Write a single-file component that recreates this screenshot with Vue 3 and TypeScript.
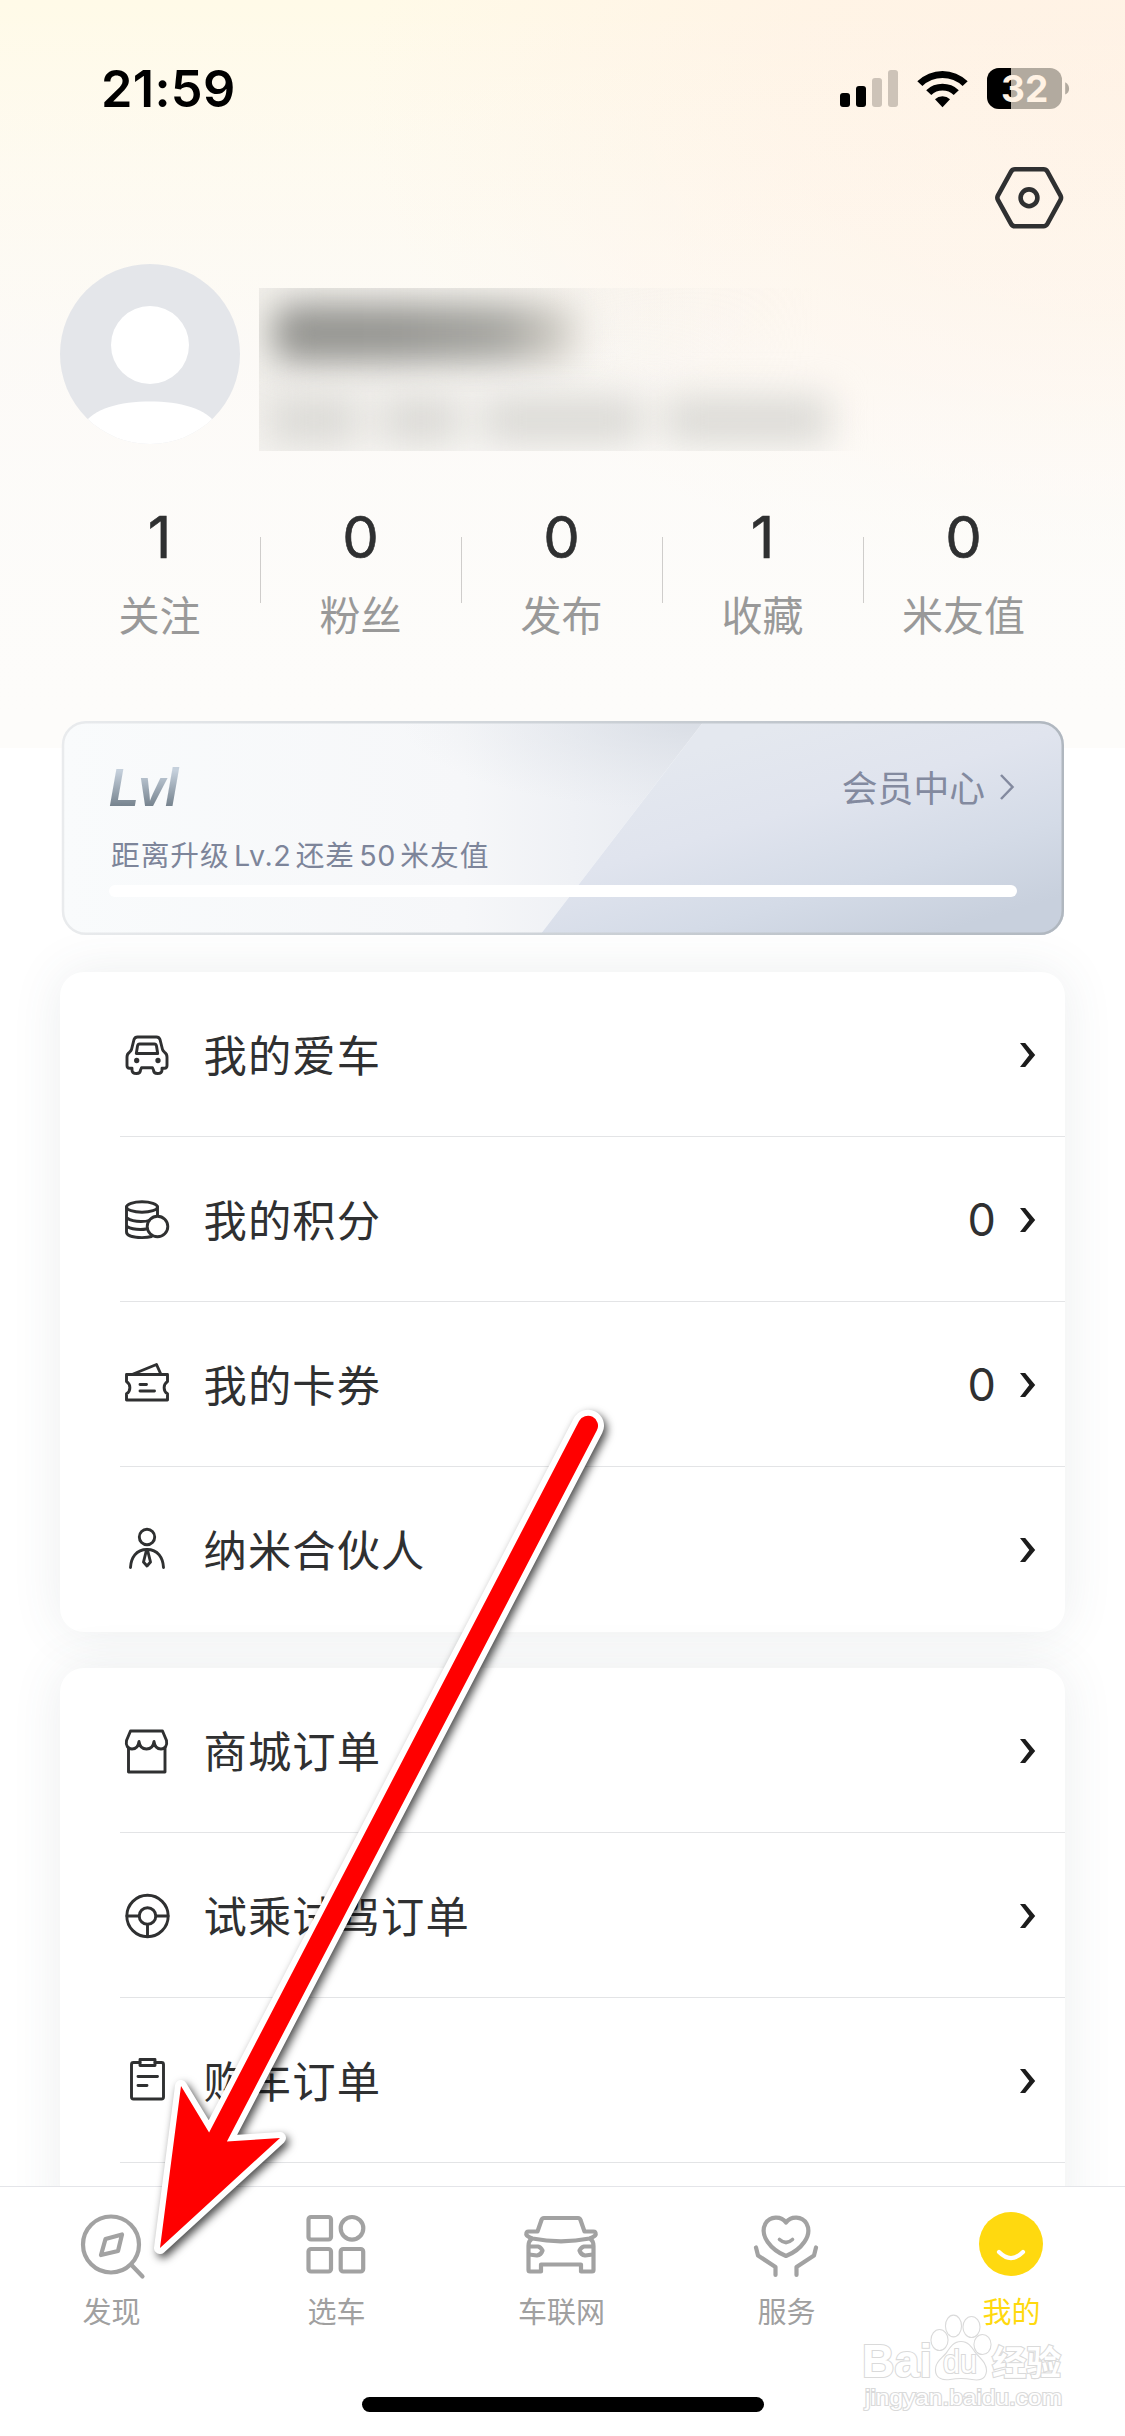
<script setup lang="ts">
interface Stat {
  value: number
  label: string
}

interface MenuItem {
  icon: string
  label: string
  count?: number
}

interface Tab {
  icon: string
  label: string
  active?: boolean
}

const stats: Stat[] = [
  { value: 1, label: '关注' },
  { value: 0, label: '粉丝' },
  { value: 0, label: '发布' },
  { value: 1, label: '收藏' },
  { value: 0, label: '米友值' },
]

const groups: MenuItem[][] = [
  [
    { icon: 'car', label: '我的爱车' },
    { icon: 'coins', label: '我的积分', count: 0 },
    { icon: 'ticket', label: '我的卡券', count: 0 },
    { icon: 'partner', label: '纳米合伙人' },
  ],
  [
    { icon: 'shop', label: '商城订单' },
    { icon: 'wheel', label: '试乘试驾订单' },
    { icon: 'clipboard', label: '购车订单' },
  ],
]

const tabs: Tab[] = [
  { icon: 'discover', label: '发现' },
  { icon: 'grid', label: '选车' },
  { icon: 'vehicle', label: '车联网' },
  { icon: 'service', label: '服务' },
  { icon: 'me', label: '我的', active: true },
]
</script>

<template>
  <div class="page">
    <main class="content">
      <header class="hero">
        <div class="status">
          <span class="time">21:59</span>
          <svg class="signals" width="232" height="44" viewBox="838 66 232 44">
            <rect x="840" y="93" width="10" height="14" rx="3" />
            <rect x="856" y="86" width="10" height="21" rx="3" />
            <rect x="872" y="78" width="10" height="29" rx="3" fill="#cdc3b8" />
            <rect x="888" y="70" width="10" height="37" rx="3" fill="#cdc3b8" />
            <path d="M917.3 81.3A36 36 0 0 1 967.7 81.3L962.6 86A29 29 0 0 0 922.4 86Z" />
            <path d="M926.2 90.2A23.5 23.5 0 0 1 958.8 90.2L953.7 95A16.5 16.5 0 0 0 931.3 95Z" />
            <path d="M935 99.2A11 11 0 0 1 950 99.2L942.5 107.3Z" />
            <rect x="987" y="68" width="75" height="41" rx="12" fill="#b2aa9f" />
            <path d="M1011 68H999A12 12 0 0 0 987 80V97A12 12 0 0 0 999 109H1011Z" />
            <path d="M1065.2 82.3C1070.4 85 1070.4 92.5 1065.2 94.5Z" fill="#b2aa9f" />
            <text x="1001" y="102" class="battery">32</text>
          </svg>
        </div>

        <div class="tools">
          <svg width="74" height="70" viewBox="992 163 74 70" fill="none" stroke="#2f3031" stroke-width="4.6">
            <path d="M1015 169.3H1043.5Q1046 169.3 1047.3 171.5L1060.4 195.3Q1061.7 197.8 1060.4 200.2L1047.3 224Q1046 226.3 1043.5 226.3H1015Q1012.5 226.3 1011.2 224L998 200.2Q996.7 197.8 998 195.3L1011.2 171.5Q1012.5 169.3 1015 169.3Z" />
            <circle cx="1029" cy="197.8" r="8.4" />
          </svg>
        </div>

        <div class="profile">
          <svg class="avatar" width="180" height="180" viewBox="0 0 180 180">
            <defs>
              <clipPath id="avatar-clip"><circle cx="90" cy="90" r="90" /></clipPath>
            </defs>
            <g clip-path="url(#avatar-clip)">
              <rect width="180" height="180" fill="#e4e6ea" />
              <circle cx="90" cy="81" r="39" fill="#fff" />
              <path d="M22 162C34 144 60 137.500 90 137.500S146 144 158 162V180H22Z" fill="#fff" />
            </g>
          </svg>
          <div class="masked">
            <div class="mask-base"></div>
            <div class="mask-name"></div>
            <div class="mask-note">
              <i class="n1"></i><i class="n2"></i><i class="n3"></i><i class="n4"></i>
            </div>
          </div>
        </div>

        <div class="stats">
          <div v-for="s in stats" :key="s.label" class="stat">
            <b>{{ s.value }}</b>
            <span>{{ s.label }}</span>
          </div>
        </div>
      </header>

      <section class="level">
        <svg class="level-bg" width="1003" height="214" viewBox="0 0 1003 214">
          <defs>
            <linearGradient id="lv-left" gradientUnits="userSpaceOnUse" x1="0" y1="0" x2="620" y2="0">
              <stop offset="0" stop-color="#f9fbfc" />
              <stop offset="0.65" stop-color="#f6f7f9" />
              <stop offset="1" stop-color="#e8ebf1" />
            </linearGradient>
            <radialGradient id="lv-shade" gradientUnits="userSpaceOnUse" cx="0" cy="0" r="1" gradientTransform="translate(640 0) scale(300 90)">
              <stop offset="0" stop-color="#d3d8e0" stop-opacity="0.7" />
              <stop offset="1" stop-color="#dfe3e9" stop-opacity="0" />
            </radialGradient>
            <linearGradient id="lv-right" gradientUnits="userSpaceOnUse" x1="730" y1="0" x2="800" y2="235">
              <stop offset="0" stop-color="#e4e8ef" />
              <stop offset="0.35" stop-color="#e0e4ee" />
              <stop offset="0.7" stop-color="#d4dbe7" />
              <stop offset="1" stop-color="#c8d0dd" />
            </linearGradient>
            <linearGradient id="lv-edge" x1="0" y1="0" x2="1" y2="0">
              <stop offset="0" stop-color="#e9ebed" />
              <stop offset="0.5" stop-color="#cdd2d7" />
              <stop offset="1" stop-color="#b0b7bf" />
            </linearGradient>
            <clipPath id="lv-clip"><rect x="1" width="1002" height="214" rx="24" /></clipPath>
          </defs>
          <g clip-path="url(#lv-clip)">
            <path d="M0 0H643L479 214H0Z" fill="url(#lv-left)" />
            <path d="M0 0H643L479 214H0Z" fill="url(#lv-shade)" />
            <path d="M643 0H1003V214H479Z" fill="url(#lv-right)" />
          </g>
          <rect x="2" y="1.25" width="999.75" height="211.5" rx="23" fill="none" stroke="url(#lv-edge)" stroke-width="2.5" />
        </svg>
        <div class="level-body">
          <div class="level-top">
            <span class="badge">Lvl</span>
            <span class="center">会员中心
              <svg width="18" height="28" viewBox="0 0 18 28" fill="none" stroke="#838a9f" stroke-width="2.5"><path d="M2 3L13.500 15L2 27" /></svg>
            </span>
          </div>
          <div class="hint">距离升级<em>Lv.2</em>还差<em>50</em>米友值</div>
          <div class="bar"></div>
        </div>
      </section>

      <section v-for="(group, gi) in groups" :key="gi" class="card">
        <div v-for="item in group" :key="item.label" class="row">
          <svg class="icon" width="48" height="48" viewBox="0 0 48 48">
            <g v-if="item.icon === 'car'">
              <path d="M13.500 5H32.500Q35 5 36 7.500L38.500 17.500Q39 19 40.500 20.200Q43 22 43 25V33.500Q43 36.200 40.500 36.200H38V38Q38 41.500 33.500 41.500Q29.500 41.500 29.500 38L28.500 35.800H17.500L16.500 38Q16.500 41.500 12.500 41.500Q8 41.500 8 38V36.200H5.500Q3 36.200 3 33.500V25Q3 22 5.500 20.200Q7 19 7.500 17.500L10 7.500Q11 5 13.500 5Z" />
              <path d="M15.500 12H30.500Q32 12 32.500 14L33.700 21.500H12.300L13.500 14Q14 12 15.500 12Z" />
              <circle cx="12.700" cy="28.500" r="1.200" class="dot" /><circle cx="34" cy="28.500" r="1.200" class="dot" />
            </g>
            <g v-else-if="item.icon === 'coins'">
              <ellipse cx="18" cy="10" rx="15.500" ry="5.200" />
              <path d="M2.500 10V35C2.500 38.500 9 40.600 18 40.600Q24 40.600 27.500 39.500M33.500 10V18.500M3 21Q8 24.500 17 24.500Q22.500 24.500 25 23.500M3 29.500Q8 32.500 16.500 32.500Q20 32.500 22 32" />
              <circle cx="33.500" cy="29.500" r="10.300" />
            </g>
            <g v-else-if="item.icon === 'ticket'">
              <path d="M2.500 12.500H43.500V19.500A7.300 7.300 0 0 0 43.500 31.800V38H2.500V31.800A7.300 7.300 0 0 0 2.500 19.500Z" />
              <path d="M8 12.500L32.500 2.500L37 12.500M16 22.500H22.500M16 29H30.500" />
            </g>
            <g v-else-if="item.icon === 'partner'">
              <circle cx="23" cy="10" r="7.700" />
              <path d="M6.500 40.500C7 31 12 22.500 23 22.500S39 31 39.500 40.500" />
              <path d="M22.500 23L19.500 35L23 39L26.500 35L23.500 23" />
            </g>
            <g v-else-if="item.icon === 'shop'">
              <path d="M6.500 3H38.500L42.500 12.500C43.500 17.500 41 21 37 21Q31 21 30 13.500Q29 21 22.500 21Q16 21 15 13.500Q14 21 8 21C4 21 1.500 17.500 2.500 12.500Z" />
              <path d="M4.500 20V44H41V20" />
            </g>
            <g v-else-if="item.icon === 'wheel'">
              <circle cx="23.500" cy="23" r="20.700" /><circle cx="23.500" cy="23" r="8.300" />
              <path d="M3 23H15M32 23H44M23.500 31.500V43.500" />
            </g>
            <g v-else>
              <path d="M16 4.500H9.500Q7.500 4.500 7.500 6.500V39Q7.500 41 9.500 41H37.500Q39.500 41 39.500 39V6.500Q39.500 4.500 37.500 4.500H31M14 18.500H33.500M14 27.500H23" />
              <path d="M16 1.500H31V7.500H16Z" />
            </g>
          </svg>
          <span class="label">{{ item.label }}</span>
          <span v-if="item.count !== undefined" class="count">{{ item.count }}</span>
          <svg class="chev" width="16" height="26" viewBox="0 0 16 26"><path d="M0 1H5.200L15.200 13L5.200 25H0L9.300 13Z" fill="#1c1c1c" /></svg>
        </div>
      </section>
    </main>

    <nav class="tabbar">
      <div class="tabs">
        <div v-for="t in tabs" :key="t.label" class="tab" :class="{ active: t.active }">
          <svg width="76" height="68" viewBox="-37 -34 76 68" fill="none" stroke="#a2a2a2" stroke-width="4.2" stroke-linejoin="round" stroke-linecap="round">
            <g v-if="t.icon === 'discover'">
              <circle cx="0" cy="0.500" r="28" /><path d="M21 21.500L31.500 32.500" />
              <path d="M-5.500 -5L11 -9.500L7 7L-10 11Z" />
            </g>
            <g v-else-if="t.icon === 'grid'">
              <rect x="-27.500" y="-27" width="22.500" height="22.500" rx="2.500" />
              <circle cx="16" cy="-15.700" r="11.300" />
              <rect x="-27.500" y="5" width="22.500" height="22.500" rx="2.500" />
              <rect x="4.700" y="5" width="22.500" height="22.500" rx="2.500" />
            </g>
            <g v-else-if="t.icon === 'vehicle'">
              <path d="M-23.500 -12.500L-19.500 -24Q-19 -26 -17 -26H17Q19 -26 19.500 -24L23.500 -12.500H32.500Q34.700 -12.500 34.700 -9.500Q34 -7.500 28.500 -5.500Q15 -3 0 -2.700Q-15 -3 -28.500 -5.500Q-34 -7.500 -34.700 -9.500Q-34.700 -12.500 -32.500 -12.500Z" />
              <path d="M-29.500 -5Q-32.500 -3 -32.500 2V26Q-32.500 27.500 -31 27.500H-20V20.500H20V27.500H31Q32.500 27.500 32.500 26V2Q32.500 -3 29.500 -5" />
              <path d="M-32 2.500H-23Q-20.500 3 -18.500 6.500Q-20 11 -24 11.500L-32 10.500M32 2.500H23Q20.500 3 18.500 6.500Q20 11 24 11.500L32 10.500" />
            </g>
            <g v-else-if="t.icon === 'service'">
              <path d="M0 -21.500C-5 -28.500 -16 -28 -20.500 -20.500C-27 -8.500 -15 6 0 12C15 6 27 -8.500 20.500 -20.500C16 -28 5 -28.500 0 -21.500Z" />
              <path d="M-6.500 -4.500Q0 1.500 6.500 -4.500" stroke-width="3.6" />
              <path d="M-30 3.500L-28 11.500L-10.500 23V31M30 3.500L28 11.500L10.500 23V31" />
            </g>
            <g v-else>
              <circle r="32" fill="#ffd90f" stroke="none" /><path d="M-12 8Q0 20 12 8" stroke="#fff" />
            </g>
          </svg>
          <span>{{ t.label }}</span>
        </div>
      </div>
      <div class="home"></div>
    </nav>

    <svg class="overlay" width="1125" height="2436" viewBox="0 0 1125 2436">
      <g class="mark">
        <text x="862" y="2377" font-size="46" font-weight="700" textLength="70" lengthAdjust="spacingAndGlyphs">Bai</text>
        <ellipse cx="939.5" cy="2340" rx="8" ry="10" />
        <ellipse cx="953.5" cy="2326" rx="7.5" ry="10.3" />
        <ellipse cx="971.5" cy="2327" rx="8" ry="10" />
        <ellipse cx="982.5" cy="2344.5" rx="8" ry="9.5" />
        <path d="M961 2342C968 2342 971 2347 975 2353C980 2359 986 2363 986 2371C985 2380 978 2380 972 2379Q961 2377 950 2379C943 2380 936 2378 936 2370C936 2362 942 2359 947 2353C951 2347 954 2342 961 2342Z" />
        <text x="943" y="2373" font-size="33" textLength="34" lengthAdjust="spacingAndGlyphs">du</text>
        <text x="992" y="2375" font-size="34" font-weight="700" textLength="69" lengthAdjust="spacingAndGlyphs">经验</text>
        <text x="865" y="2405" font-size="22" textLength="197" lengthAdjust="spacingAndGlyphs">jingyan.baidu.com</text>
      </g>
      <path
        class="arrow"
        d="M160 2248L181 2086L209.100 2132.400L579.100 1421.100A10 10 0 0 1 596.900 1430.300L226.900 2141.600L280 2138Z"
      />
    </svg>
  </div>
</template>

<style>
body {
  margin: 0;
}
</style>

<style scoped>
.page {
  position: relative;
  width: 1125px;
  height: 2436px;
  overflow: hidden;
  display: flex;
  flex-direction: column;
  background: #fff;
  color: #2f3031;
  font-family: Inter, "Noto Sans CJK SC", sans-serif;
}
svg {
  display: block;
}
.content {
  height: 2186px;
  overflow: hidden;
}
.hero {
  height: 748px;
  background:
    linear-gradient(180deg, rgba(253, 252, 250, 0) 0, rgba(253, 252, 250, 0.35) 50%, #fdfcfa 96%),
    radial-gradient(ellipse 760px 500px at 1125px 90px, #fff2e5 0, rgba(255, 242, 229, 0.75) 45%, rgba(255, 244, 234, 0) 100%),
    linear-gradient(180deg, #fffae8 0, #fefaee 22%, #fcf9f5 48%, #fdfcfa 100%);
}
.status {
  height: 134px;
  box-sizing: border-box;
  padding: 66px 55px 0 101px;
  display: flex;
  justify-content: space-between;
}
.time {
  font-size: 50.5px;
  line-height: 46px;
  font-weight: 600;
  color: #000;
  letter-spacing: 0.3px;
}
.battery {
  font: 700 37px Inter, sans-serif;
  fill: #fff2e4;
}
.tools {
  height: 130px;
  box-sizing: border-box;
  padding: 29px 59px 0 0;
  display: flex;
  justify-content: flex-end;
}
.profile {
  height: 180px;
  padding-left: 60px;
  display: flex;
  gap: 19px;
}
.masked {
  position: relative;
  width: 700px;
  height: 163px;
  margin-top: 24px;
  overflow: hidden;
}
.mask-base {
  height: 163px;
  background: linear-gradient(90deg, rgba(236, 234, 230, 0.7) 0, rgba(236, 234, 230, 0.35) 45%, rgba(236, 234, 230, 0) 80%);
  -webkit-mask-image: linear-gradient(165deg, #000 25%, transparent 85%);
}
.mask-name {
  position: absolute;
  left: 14px;
  top: 16px;
  width: 306px;
  height: 58px;
  border-radius: 20px;
  background: linear-gradient(90deg, #93938f, #959591 40%, #a5a5a0 75%, #c8c5be 90%, #e0ddd6);
  filter: blur(17px);
}
.mask-note {
  position: absolute;
  left: 10px;
  top: 108px;
  display: flex;
  gap: 22px;
  filter: blur(18px);
}
.mask-note i {
  height: 48px;
  background: #dbdad6;
}
.n1 { width: 90px; }
.n2 { width: 80px; }
.n3 { width: 160px; }
.n4 { width: 165px; }
.stats {
  display: flex;
  padding: 59px 60px 0;
}
.stat {
  position: relative;
  width: 201px;
  height: 150px;
  display: flex;
  flex-direction: column;
  align-items: center;
}
.stat + .stat::before {
  content: "";
  position: absolute;
  left: -1px;
  top: 34px;
  width: 1px;
  height: 66px;
  background: #cfcdcb;
}
.stat b {
  margin-right: 2px;
  font-size: 58px;
  line-height: 68px;
  font-weight: 400;
  -webkit-text-stroke: 0.6px #2f3031;
}
.stat span {
  margin: 15px 2px 0 0;
  font-size: 41px;
  line-height: 60px;
  color: #999;
}
.level {
  position: relative;
  width: 1003px;
  height: 214px;
  margin: -27px 0 37px 61px;
}
.level-bg {
  position: absolute;
  left: 0;
  top: 0;
}
.level-body {
  position: relative;
  padding: 38px 47px 0 48px;
}
.level-top {
  display: flex;
  justify-content: space-between;
  height: 58px;
}
.badge {
  height: 58px;
  padding: 0 10px 0 0;
  font: italic 700 53px/58px "Liberation Sans", sans-serif;
  letter-spacing: -0.5px;
  transform: scaleX(0.92);
  transform-origin: 0 50%;
  background: linear-gradient(180deg, #c5d0dc 20%, #75828d 82%);
  -webkit-background-clip: text;
  background-clip: text;
  color: transparent;
}
.center {
  display: flex;
  align-items: center;
  height: 54px;
  gap: 14px;
  font-size: 35.8px;
  color: #838a9f;
}
.hint {
  margin: 19px 0 0 2px;
  height: 40px;
  line-height: 40px;
  font-size: 28.7px;
  letter-spacing: 1px;
  color: #7d859a;
}
.hint em {
  font-style: normal;
  letter-spacing: 0.6px;
  margin: 0 4.3px;
}
.bar {
  margin-top: 9px;
  height: 12px;
  border-radius: 6px;
  background: #fff;
}
.card {
  width: 1005px;
  margin: 0 0 36px 60px;
  border-radius: 24px;
  background: #fff;
  box-shadow: 0 0 50px rgba(70, 90, 100, 0.1);
}
.card:last-child {
  height: 560px;
  margin-bottom: 0;
  border-radius: 24px 24px 0 0;
}
.row {
  height: 165px;
  box-sizing: border-box;
  margin-left: 60px;
  padding: 0 29px 0 4px;
  display: flex;
  align-items: center;
  border-bottom: 1px solid #e3e4e6;
}
.card:not(:last-child) .row:last-child {
  border-bottom-color: transparent;
}
.icon {
  margin-top: 4px;
  margin-right: 1px;
  margin-left: -0.5px;
  fill: none;
  stroke: #2f3031;
  stroke-width: 2.9;
  stroke-linejoin: round;
  stroke-linecap: round;
}
.dot {
  fill: #2f3031;
}
.label {
  flex: 1;
  margin: -3px 0 0 31px;
  font-size: 43.3px;
  letter-spacing: 1.1px;
}
.count {
  margin: 1px 24px 0 0;
  font-size: 45px;
  font-weight: 400;
}
.chev {
  margin-top: 2px;
}
.tabbar {
  height: 249px;
  border-top: 1px solid #e4e5e9;
  background: #fff;
}
.tabs {
  display: flex;
  height: 210px;
  margin-left: -1px;
}
.tab {
  width: 225px;
  display: flex;
  flex-direction: column;
  align-items: center;
  padding-top: 23px;
  font-size: 29px;
  line-height: 42px;
  color: #a0a0a0;
}
.tab svg {
  overflow: visible;
}
.tab span {
  margin-top: 14px;
}
.tab.active {
  color: #ffd90f;
}
.home {
  width: 402px;
  height: 15px;
  margin: 0 0 0 362px;
  border-radius: 8px;
  background: #000;
}
.overlay {
  position: absolute;
  left: 0;
  top: 0;
}
.arrow {
  fill: #f00;
  stroke: #fff;
  stroke-width: 12;
  stroke-linejoin: round;
  paint-order: stroke;
  filter: drop-shadow(3px 4px 4px rgba(0, 0, 0, 0.7));
}
.mark {
  fill: #fff;
  stroke: #dadada;
  stroke-width: 2.2;
  paint-order: stroke;
  font-family: "Liberation Sans", "Noto Sans CJK SC", sans-serif;
}
</style>
